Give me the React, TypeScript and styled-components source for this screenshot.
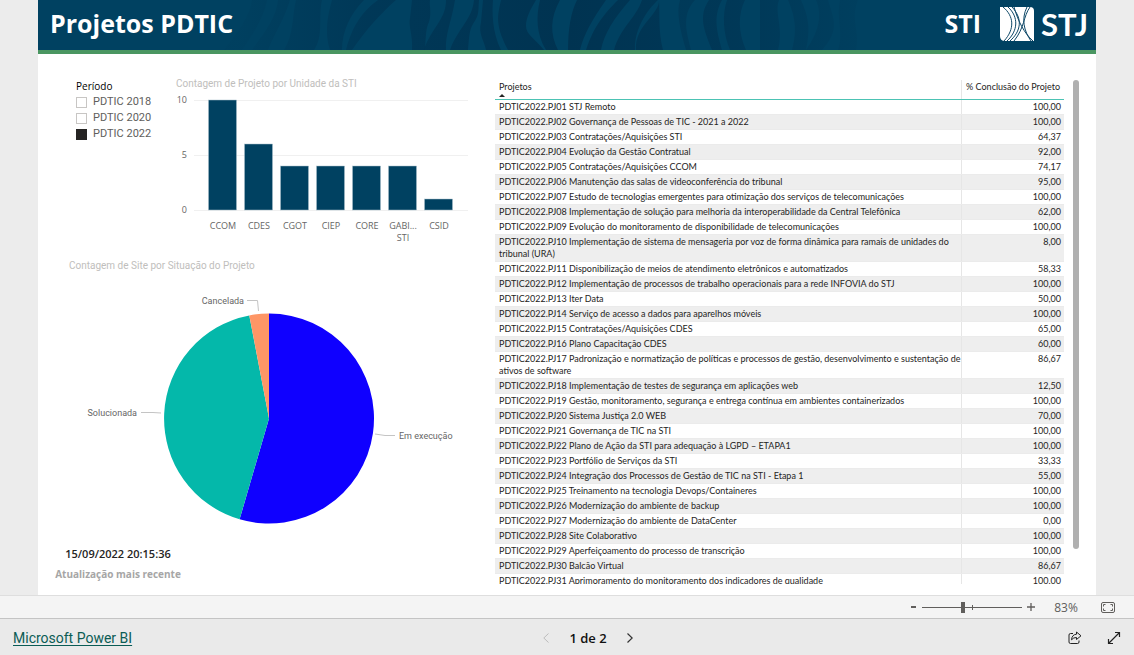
import React, { useState } from "react";
import styled, { createGlobalStyle } from "styled-components";

const compactFont = `Roboto, "Open Sans", sans-serif`;
const narrowFont = `Lato, "Open Sans", sans-serif`;

const GlobalStyle = createGlobalStyle`
  * { box-sizing: border-box; }
  body {
    margin: 0;
    background: #ececec;
    color: #252423;
    font-family: "Open Sans", "Noto Sans", sans-serif;
    font-size: 9px;
  }
`;

const Shell = styled.div`
  display: flex;
  flex-direction: column;
  height: 100vh;
  min-height: 600px;
`;

const Report = styled.main`
  flex: 1;
  min-height: 0;
  margin: 0 38px;
  display: flex;
  flex-direction: column;
  background: #fff;
`;

const Banner = styled.header`
  position: relative;
  flex: none;
  height: 54px;
  display: flex;
  align-items: center;
  padding: 0 8px 2px 12px;
  background: #004161;
  border-bottom: 4px solid #4a9661;
  color: #fff;
`;

const Waves = styled.svg`
  position: absolute;
  inset: 0;
  width: 100%;
  height: 100%;
`;

const Title = styled.h1`
  position: relative;
  flex: 1;
  margin: 0;
  padding-bottom: 2px;
  font-size: 25px;
  line-height: 32px;
  font-weight: 700;
`;

const Unit = styled.span`
  position: relative;
  padding-bottom: 2px;
  font-size: 25px;
  line-height: 32px;
  font-weight: 700;
  margin-right: 19px;
`;

const Brand = styled.div`
  position: relative;
  display: flex;
  align-items: center;
  gap: 7px;
  font-family: Lato, sans-serif;
  font-size: 31px;
  line-height: 34px;
  font-weight: 700;
`;

const Columns = styled.div`
  flex: 1;
  min-height: 0;
  display: grid;
  grid-template-columns: minmax(0, 457fr) minmax(0, 601fr);
`;

const Charts = styled.div`
  display: flex;
  flex-direction: column;
  padding-top: 22px;
`;

const TopRow = styled.div`
  display: flex;
  height: 182px;
`;

const Slicer = styled.fieldset`
  flex: none;
  width: 134px;
  margin: 0;
  padding: 3px 0 0 38px;
  border: 0;
`;

const SlicerTitle = styled.div`
  font-size: 10px;
  line-height: 14px;
  color: #000;
  margin-bottom: 1px;
`;

const Option = styled.label`
  display: flex;
  align-items: center;
  gap: 6px;
  height: 16px;
  font-family: ${compactFont};
  font-size: 11px;
  line-height: 16px;
  color: #605e5c;
`;

const Tick = styled.input`
  appearance: none;
  width: 11px;
  height: 11px;
  margin: 0;
  border: 1px solid #c8c6c4;
  background: #fff;
  &:checked {
    background: #252423;
    border-color: #252423;
  }
`;

const Visual = styled.section`
  min-width: 0;
`;

const VisualTitle = styled.h2<{ $indent: number }>`
  height: 14px;
  margin: 0;
  padding: 1px 0 0 ${(p) => p.$indent}px;
  font-family: ${compactFont};
  font-size: 10px;
  line-height: 14px;
  font-weight: 400;
  color: #c0bebc;
`;

const Drawing = styled.svg<{ $compact?: boolean }>`
  display: block;
  max-width: 100%;
  font-family: ${(p) => (p.$compact ? compactFont : "inherit")};
  font-size: 9px;
  fill: #666;
`;

const Stamp = styled.div`
  width: 160px;
  margin-top: 5px;
  text-align: center;
  font-weight: 600;
  font-size: 11px;
  line-height: 20px;
`;

const StampLabel = styled.div`
  color: #a6a6a6;
  font-size: 10px;
  font-weight: 700;
`;

const TablePanel = styled.div`
  min-height: 0;
  display: flex;
  gap: 9px;
  padding: 26px 17px 11px 0;
`;

const TableScroll = styled.div`
  flex: 1;
  overflow: hidden;
`;

const Thumb = styled.div`
  width: 6px;
  height: 93%;
  border-radius: 3px;
  background: #b0b0b0;
`;

const Table = styled.table`
  width: 100%;
  border-collapse: collapse;
  table-layout: fixed;
  font-family: ${narrowFont};
`;

const HeadCell = styled.th<{ $end?: boolean }>`
  height: 19px;
  padding: 1px 4px 0;
  width: ${(p) => (p.$end ? "103px" : "auto")};
  text-align: ${(p) => (p.$end ? "right" : "left")};
  vertical-align: top;
  white-space: nowrap;
  font-weight: 400;
  line-height: 12px;
  border-bottom: 1px solid #4cc3b4;
  border-left: ${(p) => (p.$end ? "1px solid #e6e6e6" : "0")};
`;

const SortMark = styled.svg`
  display: block;
  margin-top: 1px;
`;

const Row = styled.tr`
  &:nth-child(even) {
    background: #eee;
  }
`;

const Cell = styled.td<{ $end?: boolean }>`
  padding: 1px ${(p) => (p.$end ? "3px" : "0")} 1px 4px;
  line-height: 12px;
  vertical-align: top;
  text-align: ${(p) => (p.$end ? "right" : "left")};
  border-left: ${(p) => (p.$end ? "1px solid #e6e6e6" : "0")};
  border-bottom: 1px solid #ebebeb;
`;

const ZoomBar = styled.div`
  flex: none;
  height: 24px;
  display: flex;
  align-items: center;
  justify-content: flex-end;
  padding-right: 19px;
  background: #f4f4f4;
  border-top: 1px solid #dedede;
  border-bottom: 1px solid #c4c4c4;
  color: #605e5c;
`;

const PlainButton = styled.button`
  display: flex;
  align-items: center;
  justify-content: center;
  padding: 0;
  border: 0;
  background: none;
  color: inherit;
  font: inherit;
`;

const StepButton = styled(PlainButton)`
  width: 18px;
  height: 20px;
`;

const SliderWrap = styled.div`
  display: flex;
  width: 100px;
  height: 12px;
  background:
    linear-gradient(#605e5c, #605e5c) 50px 4px / 1px 5px no-repeat,
    linear-gradient(#605e5c, #605e5c) 0 6px / 100% 1px no-repeat;
`;

const Slider = styled.input`
  appearance: none;
  width: 100%;
  height: 12px;
  margin: 0;
  background: none;
  &::-webkit-slider-thumb {
    appearance: none;
    width: 4px;
    height: 11px;
    background: #605e5c;
  }
`;

const ZoomValue = styled.span`
  width: 42px;
  margin: 0 14px 0 5px;
  text-align: center;
  font-size: 12px;
`;

const Footer = styled.footer`
  flex: none;
  height: 36px;
  display: grid;
  grid-template-columns: 1fr auto 1fr;
  align-items: center;
  padding: 2px 13px 0 13px;
  background: #eaeaea;
`;

const BrandLink = styled.a`
  justify-self: start;
  font-family: ${compactFont};
  font-size: 14px;
  line-height: 20px;
  color: #0b5c55;
  text-underline-offset: 2px;
`;

const Pager = styled.nav`
  display: flex;
  align-items: center;
  margin-left: 42px;
  gap: 14px;
  font-size: 13px;
  font-weight: 600;
  color: #111;
`;

const Actions = styled.div`
  display: flex;
  justify-content: flex-end;
  gap: 25px;
`;

const units: [string, number, string?][] = [
  ["CCOM", 10],
  ["CDES", 6],
  ["CGOT", 4],
  ["CIEP", 4],
  ["CORE", 4],
  ["GABI...", 4, "STI"],
  ["CSID", 1],
];

const projects: [string, string][] = [
  ["STJ Remoto", "100,00"],
  ["Governança de Pessoas de TIC - 2021 a 2022", "100,00"],
  ["Contratações/Aquisições STI", "64,37"],
  ["Evolução da Gestão Contratual", "92,00"],
  ["Contratações/Aquisições CCOM", "74,17"],
  ["Manutenção das salas de videoconferência do tribunal", "95,00"],
  ["Estudo de tecnologias emergentes para otimização dos serviços de telecomunicações", "100,00"],
  ["Implementação de solução para melhoria da interoperabilidade da Central Telefônica", "62,00"],
  ["Evolução do monitoramento de disponibilidade de telecomunicações", "100,00"],
  ["Implementação de sistema de mensageria por voz de forma dinâmica para ramais de unidades do tribunal (URA)", "8,00"],
  ["Disponibilização de meios de atendimento eletrônicos e automatizados", "58,33"],
  ["Implementação de processos de trabalho operacionais para a rede INFOVIA do STJ", "100,00"],
  ["Iter Data", "50,00"],
  ["Serviço de acesso a dados para aparelhos móveis", "100,00"],
  ["Contratações/Aquisições CDES", "65,00"],
  ["Plano Capacitação CDES", "60,00"],
  ["Padronização e normatização de políticas e processos de gestão, desenvolvimento e sustentação de ativos de software", "86,67"],
  ["Implementação de testes de segurança em aplicações web", "12,50"],
  ["Gestão, monitoramento, segurança e entrega contínua em ambientes containerizados", "100,00"],
  ["Sistema Justiça 2.0 WEB", "70,00"],
  ["Governança de TIC na STI", "100,00"],
  ["Plano de Ação da STI para adequação à LGPD – ETAPA1", "100,00"],
  ["Portfólio de Serviços da STI", "33,33"],
  ["Integração dos Processos de Gestão de TIC na STI - Etapa 1", "55,00"],
  ["Treinamento na tecnologia Devops/Containeres", "100,00"],
  ["Modernização do ambiente de backup", "100,00"],
  ["Modernização do ambiente de DataCenter", "0,00"],
  ["Site Colaborativo", "100,00"],
  ["Aperfeiçoamento do processo de transcrição", "100,00"],
  ["Balcão Virtual", "86,67"],
  ["Aprimoramento do monitoramento dos indicadores de qualidade", "100,00"],
];

function BannerWaves() {
  return (
    <Waves viewBox="0 0 1058 50" preserveAspectRatio="xMidYMin slice" aria-hidden="true">
      <defs>
        <linearGradient id="deep" gradientUnits="userSpaceOnUse" x1="200" y1="0" x2="860" y2="0">
          <stop offset="0" stopColor="#003453" stopOpacity="0.1" />
          <stop offset="0.2" stopColor="#003453" stopOpacity="0.7" />
          <stop offset="0.5" stopColor="#003351" />
          <stop offset="0.75" stopColor="#003453" stopOpacity="0.7" />
          <stop offset="1" stopColor="#003453" stopOpacity="0" />
        </linearGradient>
      </defs>
      <g fill="url(#deep)">
        <path d="M214 0H229C226 16 218 30 204 50H186C200 32 212 16 214 0Z" />
        <path d="M240 0H252C246 20 236 34 230 50H214C228 30 238 18 240 0Z" />
        <path d="M258 0H284C280 18 286 36 276 50H246C256 34 254 16 258 0Z" />
        <path d="M294 0H326C312 14 304 32 304 50H292C286 32 290 14 294 0Z" />
        <path d="M358 0H340C320 14 312 34 308 50H314C328 30 342 14 358 0Z" />
        <path d="M374 0H392C391 6 394 12 391 22C388 28 388 34 387 50H374C375 34 370 26 372 18Z" />
        <path d="M408 0H417C414 20 407 34 408 50H386C393 28 408 20 408 0Z" />
        <path d="M436 0H441C440 10 442 14 435 24C431 30 431 40 430 50H412C420 28 434 20 436 0Z" />
        <path d="M445 0H455C454 12 454 32 463 50H448C446 40 440 34 443 22Z" />
        <path d="M463 0H498C492 10 488 18 488 26C488 34 496 38 506 50H470C456 24 460 14 463 0Z" />
        <path d="M502 0H522C512 18 512 34 520 50H508C498 34 498 16 502 0Z" />
        <path d="M539 0H568C554 20 546 34 542 50H530C530 28 533 12 539 0Z" />
        <path d="M580 0H592C576 18 566 34 563 50H548C556 26 566 14 580 0Z" />
        <path d="M604 0H620C618 2 596 22 597 50H576C582 28 598 18 604 0Z" />
        <path d="M621 0C622 14 596 26 598 50H625C620 30 622 14 621 0Z" />
        <path d="M642 0H657C642 16 650 36 653 50H648C642 30 638 12 642 0Z" opacity="0.7" />
        <path d="M671 0H684C674 18 680 34 684 50H674C666 30 660 16 671 0Z" />
        <path d="M689 0H707C700 14 700 32 708 50H692C685 34 684 14 689 0Z" />
        <path d="M722 0H741C736 14 746 26 740 50H722Z" />
        <path d="M750 0H763C768 12 774 24 768 50H754C760 28 756 14 750 0Z" />
        <path d="M778 0H790C796 20 802 30 784 50H768C782 30 784 14 778 0Z" />
        <path d="M802 0H820C812 20 822 30 818 50H800C806 34 798 18 802 0Z" />
      </g>
    </Waves>
  );
}

function Emblem() {
  return (
    <svg width="34" height="34" viewBox="0 0 34 34" aria-hidden="true">
      <path d="M0 0H30Q34 0 34 4V34H5Q0 34 0 29Z" fill="#fff" />
      <g fill="none" stroke="#0d4767" strokeWidth="1">
        <path d="M3 0C14 9 15 22 4 34" />
        <path d="M8 0C19 10 18 24 7 34" />
        <path d="M12 0C23 12 21 24 10 34" />
        <path d="M14 0C18 14 24 26 33 34" />
        <path d="M27 0C21 12 24 24 31 34" />
        <path d="M30 0C23 10 25 20 14 34" />
      </g>
    </svg>
  );
}

function BarChart() {
  return (
    <Drawing width="300" height="160" viewBox="0 0 300 160" role="img" aria-label="Contagem de Projeto por Unidade da STI">
      {[10, 5, 0].map((v) => (
        <g key={v}>
          <path d={`M22 ${120.5 - v * 11}H296`} stroke="#f0f0f0" />
          <text x="15" y={123 - v * 11} textAnchor="end">{v}</text>
        </g>
      ))}
      {units.map(([name, count, more], i) => (
        <g key={name}>
          <rect x={36.5 + i * 36} y={120 - count * 11} width="28" height={count * 11} fill="#004161" stroke="#a9bfcb" strokeWidth="0.5" />
          <text x={51 + i * 36} y="139" textAnchor="middle">{name}</text>
          {more && <text x={51 + i * 36} y="151" textAnchor="middle">{more}</text>}
        </g>
      ))}
    </Drawing>
  );
}

function PieChart() {
  return (
    <Drawing $compact width="457" height="267" viewBox="0 0 457 267" role="img" aria-label="Contagem de Site por Situação do Projeto">
      <path d="M231 146.500V41.500A105 105 0 1 1 201.600 247.300Z" fill="#0f00ff" />
      <path d="M231 146.500L201.600 247.300A105 105 0 0 1 211.300 43.400Z" fill="#04b8aa" />
      <path d="M231 146.500L211.300 43.400A105 105 0 0 1 231 41.500Z" fill="#fe9666" />
      <g fill="none" stroke="#c4c4c4">
        <path d="M209 28.500H219.500L220.500 39" />
        <path d="M103 140.500H115L123 141" />
        <path d="M337 162L347 163.500H357" />
      </g>
      <text x="206" y="32" textAnchor="end">Cancelada</text>
      <text x="99" y="144" textAnchor="end">Solucionada</text>
      <text x="361" y="167">Em execução</text>
    </Drawing>
  );
}

export default function App() {
  const [periods, setPeriods] = useState(["PDTIC 2022"]);
  const [zoom, setZoom] = useState(41);
  const toggle = (p: string) =>
    setPeriods((now) => (now.includes(p) ? now.filter((x) => x !== p) : [...now, p]));

  return (
    <Shell>
      <GlobalStyle />
      <Report>
        <Banner>
          <BannerWaves />
          <Title>Projetos PDTIC</Title>
          <Unit>STI</Unit>
          <Brand>
            <Emblem />
            STJ
          </Brand>
        </Banner>
        <Columns>
          <Charts>
            <TopRow>
              <Slicer>
                <SlicerTitle>Período</SlicerTitle>
                {["PDTIC 2018", "PDTIC 2020", "PDTIC 2022"].map((p) => (
                  <Option key={p}>
                    <Tick type="checkbox" checked={periods.includes(p)} onChange={() => toggle(p)} />
                    {p}
                  </Option>
                ))}
              </Slicer>
              <Visual>
                <VisualTitle $indent={4}>Contagem de Projeto por Unidade da STI</VisualTitle>
                <BarChart />
              </Visual>
            </TopRow>
            <Visual>
              <VisualTitle $indent={31}>Contagem de Site por Situação do Projeto</VisualTitle>
              <PieChart />
            </Visual>
            <Stamp>
              <div>15/09/2022 20:15:36</div>
              <StampLabel>Atualização mais recente</StampLabel>
            </Stamp>
          </Charts>
          <TablePanel>
            <TableScroll>
              <Table>
                <thead>
                  <tr>
                    <HeadCell>
                      Projetos
                      <SortMark width="6" height="3" viewBox="0 0 6 3">
                        <path d="M0 3L3 0L6 3Z" fill="#252423" />
                      </SortMark>
                    </HeadCell>
                    <HeadCell $end>% Conclusão do Projeto</HeadCell>
                  </tr>
                </thead>
                <tbody>
                  {projects.map(([name, done], i) => (
                    <Row key={name}>
                      <Cell>{`PDTIC2022.PJ${String(i + 1).padStart(2, "0")} ${name}`}</Cell>
                      <Cell $end>{done}</Cell>
                    </Row>
                  ))}
                </tbody>
              </Table>
            </TableScroll>
            <Thumb />
          </TablePanel>
        </Columns>
      </Report>
      <ZoomBar>
        <StepButton aria-label="Reduzir">
          <svg width="5" height="2"><path d="M0 1H5" stroke="currentColor" strokeWidth="2" /></svg>
        </StepButton>
        <SliderWrap>
          <Slider type="range" aria-label="Zoom" min={0} max={100} value={zoom} onChange={(e) => setZoom(Number(e.target.value))} />
        </SliderWrap>
        <StepButton aria-label="Ampliar">
          <svg width="8" height="8"><path d="M0 4H8M4 0V8" stroke="currentColor" strokeWidth="1.300" /></svg>
        </StepButton>
        <ZoomValue>83%</ZoomValue>
        <PlainButton aria-label="Ajustar à página">
          <svg width="14" height="11" viewBox="0 0 14 11" fill="none" stroke="currentColor">
            <rect x="0.500" y="0.500" width="13" height="10" rx="1.500" />
            <path d="M2.500 4.500V2.500H4.500M9.500 2.500H11.500V4.500M11.500 6.500V8.500H9.500M4.500 8.500H2.500V6.500" />
          </svg>
        </PlainButton>
      </ZoomBar>
      <Footer>
        <BrandLink href="#powerbi">Microsoft Power BI</BrandLink>
        <Pager aria-label="Páginas">
          <StepButton aria-label="Página anterior" disabled>
            <svg width="6" height="10" viewBox="0 0 6 10" fill="none" stroke="#bdbdbd"><path d="M5.500 0.500L0.800 5L5.500 9.500" /></svg>
          </StepButton>
          <span>1 de 2</span>
          <StepButton aria-label="Próxima página">
            <svg width="6" height="10" viewBox="0 0 6 10" fill="none" stroke="#333" strokeWidth="1.200"><path d="M0.500 0.500L5.200 5L0.500 9.500" /></svg>
          </StepButton>
        </Pager>
        <Actions>
          <PlainButton aria-label="Compartilhar">
            <svg width="14" height="14" viewBox="0 0 14 14" fill="none" stroke="#222" strokeLinejoin="round">
              <path d="M5 2.500H2.500Q1 2.500 1 4V11Q1 12.500 2.500 12.500H9.500Q11 12.500 11 11V9.500" />
              <path d="M8.500 1L13 4.800L8.500 8.500V6.500Q5.500 6.300 3.500 8.800Q4 3.500 8.500 3.200Z" />
            </svg>
          </PlainButton>
          <PlainButton aria-label="Tela inteira">
            <svg width="14" height="14" viewBox="0 0 14 14" fill="none" stroke="#222" strokeWidth="1.200">
              <path d="M1.500 12.500L12.500 1.500M8 1.500H12.500V6M1.500 8V12.500H6" />
            </svg>
          </PlainButton>
        </Actions>
      </Footer>
    </Shell>
  );
}
